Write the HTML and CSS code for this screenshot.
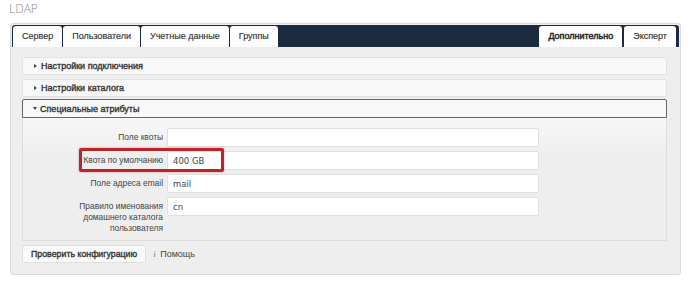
FILE: index.html
```html
<!DOCTYPE html>
<html lang="ru">
  <head>
    <meta charset="utf-8" />
    <title>LDAP</title>
    <link rel="stylesheet" href="styles.css">
  </head>
  <body>
    <h1 class="page-title">LDAP</h1>
    <div class="panel">
      <ul class="tabs">
        <li class="tab">Сервер</li>
        <li class="tab">Пользователи</li>
        <li class="tab">Учетные данные</li>
        <li class="tab">Группы</li>
        <li class="tab tab-active">Дополнительно</li>
        <li class="tab">Эксперт</li>
      </ul>
      <div class="panel-body">
        <div class="accordion">
          <div class="acc-head"><span class="caret caret-right"></span>Настройки подключения</div>
          <div class="acc-head"><span class="caret caret-right"></span>Настройки каталога</div>
          <div class="acc-head acc-open"><span class="caret caret-down"></span>Специальные атрибуты</div>
          <div class="acc-body">
            <div class="form-row">
              <label class="form-label">Поле квоты</label>
              <input class="form-input" type="text" value="">
            </div>
            <div class="form-row">
              <label class="form-label">Квота по умолчанию</label>
              <input class="form-input" type="text" value="400 GB">
              <span class="highlight"></span>
            </div>
            <div class="form-row">
              <label class="form-label">Поле адреса email</label>
              <input class="form-input" type="text" value="mail">
            </div>
            <div class="form-row">
              <label class="form-label">Правило именования домашнего каталога пользователя</label>
              <input class="form-input" type="text" value="cn">
            </div>
          </div>
        </div>
        <div class="actions">
          <button class="btn">Проверить конфигурацию</button>
          <span class="help"><i>i</i> Помощь</span>
        </div>
      </div>
    </div>
  </body>
</html>
```

FILE: styles.css
```css
* {
  box-sizing: border-box;
}
body {
  margin: 0;
  background-color: #ffffff;
  font-family: "Liberation Sans", Arial, sans-serif;
  font-size: 9px;
  color: #333333;
}
.page-title {
  margin: 0;
  padding: 1px 0 0 9px;
  font-family: "Open Sans", sans-serif;
  font-weight: 300;
  font-size: 12px;
  line-height: 16px;
  color: #8a8a8a;
}
.panel {
  margin: 6px 9px 0 10px;
  padding: 1px;
  height: 252px;
  background-color: #eeeeee;
  border: 1px solid #d9d9d9;
  border-radius: 3px;
}
.tabs {
  list-style: none;
  margin: 0;
  padding: 1px 3px 0 1px;
  height: 22px;
  display: flex;
  gap: 1px;
  background-color: #1d2b40;
  border-radius: 3px 3px 0 0;
}
.tab {
  height: 21px;
  line-height: 21px;
  padding: 0 9px;
  background-color: #fdfdfd;
  border-radius: 3px 3px 0 0;
  font-size: 9px;
  color: #333333;
  -webkit-text-stroke: 0.15px #333333;
}
.tab-active {
  margin-left: auto;
  margin-right: 1px;
  background-color: #ffffff;
  color: #222222;
  -webkit-text-stroke: 0.45px #222222;
}
.panel-body {
  padding: 10px 12px 11px 10px;
}
.acc-head {
  height: 18px;
  line-height: 16px;
  padding-left: 11px;
  background-color: #f8f8f8;
  border: 1px solid #e2e2e2;
  border-radius: 2px;
  color: #333333;
  -webkit-text-stroke: 0.35px #333333;
  display: flex;
  align-items: center;
}
.acc-head + .acc-head {
  margin-top: 4px;
}
.acc-head.acc-open {
  margin-top: 2px;
  height: 19px;
  border-color: #666666;
  border-radius: 2px 2px 0 0;
}
.caret {
  display: inline-block;
  width: 0;
  height: 0;
}
.caret-right {
  border-left: 3px solid #444444;
  border-top: 2.5px solid transparent;
  border-bottom: 2.5px solid transparent;
  margin-right: 4px;
}
.caret-down {
  margin-left: -1px;
  margin-right: 3px;
  border-top: 3px solid #444444;
  border-left: 2.5px solid transparent;
  border-right: 2.5px solid transparent;
}
.acc-body {
  padding: 10px 0 6px 0;
  border: 1px solid #dddddd;
  border-top: none;
  background: linear-gradient(#f7f7f7, #eeeeee 40px);
}
.form-row {
  position: relative;
  display: flex;
  align-items: flex-start;
  padding-left: 50px;
}
.form-row + .form-row {
  margin-top: 4px;
}
.form-label {
  width: 90px;
  margin-right: 4px;
  padding-top: 4px;
  line-height: 11px;
  font-size: 8.4px;
  text-align: right;
  color: #444444;
}
.form-input {
  width: 372px;
  height: 19px;
  padding: 0 5px;
  border: 1px solid #e0e0e0;
  border-radius: 2px;
  background-color: #ffffff;
  font-family: "DejaVu Sans", Verdana, sans-serif;
  font-size: 8.5px;
  color: #444444;
  outline: none;
}
.highlight {
  position: absolute;
  left: 56px;
  top: -3px;
  width: 145px;
  height: 24px;
  border: 3px solid #be232b;
  border-radius: 2px;
  box-shadow: 0 0 2px rgba(150, 20, 20, 0.5);
}
.actions {
  margin-top: 4px;
  display: flex;
  align-items: center;
}
.btn {
  height: 18px;
  padding: 0 8px;
  border: 1px solid #e0e0e0;
  border-radius: 2px;
  background-color: #fafafa;
  font-family: "Liberation Sans", Arial, sans-serif;
  font-size: 8.8px;
  color: #333333;
  -webkit-text-stroke: 0.35px #333333;
}
.help {
  margin-left: 7px;
  color: #444444;
}
.help i {
  font-family: "Liberation Serif", serif;
  color: #777777;
  margin-right: 2px;
}
```
